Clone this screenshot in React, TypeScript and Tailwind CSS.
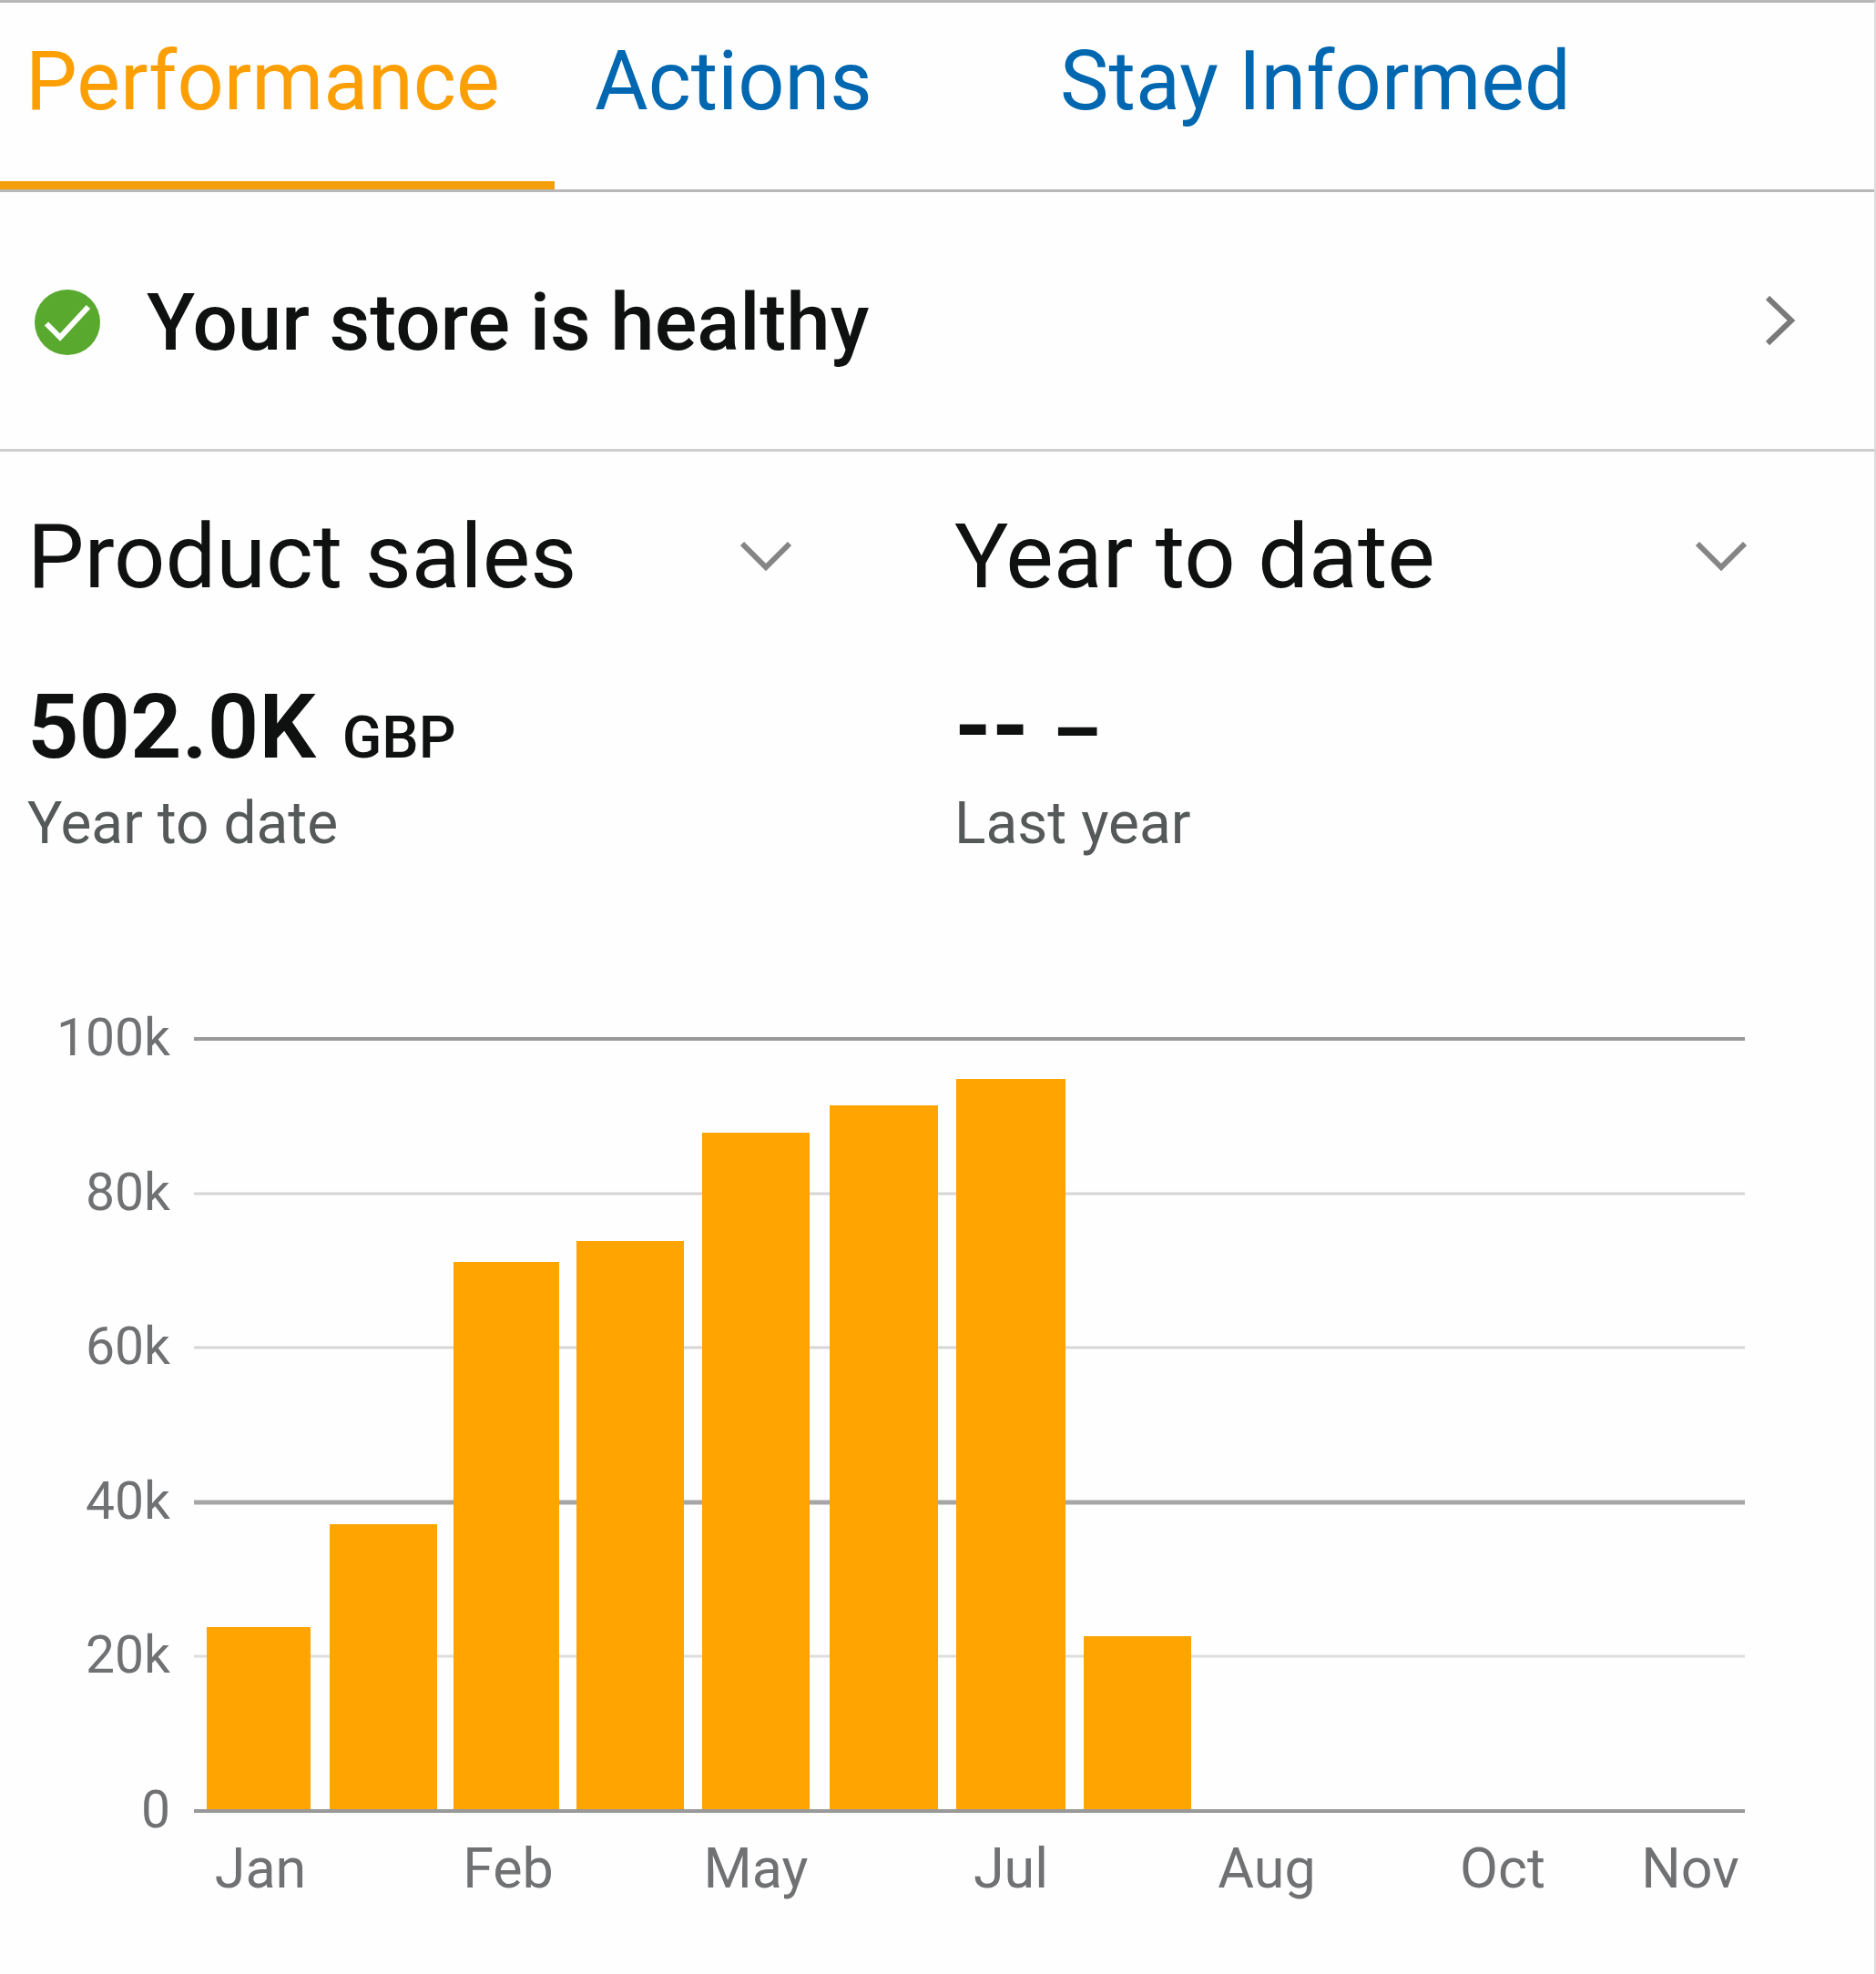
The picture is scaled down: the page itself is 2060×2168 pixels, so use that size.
import React, { useState } from 'react';

interface Bar {
  x: number;
  width: number;
  value: number;
}

interface Tick {
  label: string;
  value: number;
  stroke: string;
  thickness: number;
}

const tabs = ['Performance', 'Actions', 'Stay Informed'];

const metrics = ['Product sales', 'Units ordered', 'Page views'];
const ranges = ['Year to date', 'Last 30 days', 'Last 7 days', 'Today'];

const ticks: Tick[] = [
  { label: '100k', value: 100, stroke: '#999999', thickness: 4 },
  { label: '80k', value: 80, stroke: '#d6d6d6', thickness: 3 },
  { label: '60k', value: 60, stroke: '#d6d6d6', thickness: 3 },
  { label: '40k', value: 40, stroke: '#a6a6a6', thickness: 5 },
  { label: '20k', value: 20, stroke: '#dedede', thickness: 3 },
  { label: '0', value: 0, stroke: '#999999', thickness: 4 },
];

// values in thousands
const bars: Bar[] = [
  { x: 227, width: 114, value: 23.8 },
  { x: 362, width: 118, value: 37.1 },
  { x: 498, width: 116, value: 71.1 },
  { x: 633, width: 118, value: 73.8 },
  { x: 771, width: 118, value: 87.8 },
  { x: 911, width: 119, value: 91.4 },
  { x: 1050, width: 120, value: 94.8 },
  { x: 1190, width: 118, value: 22.6 },
];

const months = [
  { label: 'Jan', x: 286 },
  { label: 'Feb', x: 558 },
  { label: 'May', x: 830 },
  { label: 'Jul', x: 1110 },
  { label: 'Aug', x: 1391 },
  { label: 'Oct', x: 1650 },
  { label: 'Nov', x: 1856 },
];

const CHART_TOP = 61;
const CHART_HEIGHT = 848;
const yOf = (value: number) => Math.round(CHART_TOP + CHART_HEIGHT * (1 - value / 100));

const CheckCircle = () => (
  <svg className="size-[74px] shrink-0" viewBox="0 0 74 74" aria-hidden="true">
    <circle cx="37" cy="37" r="36" fill="#58a92e" />
    <path d="M14 38.5 L29 53.5 L60 20" fill="none" stroke="#fff" strokeWidth="6" />
  </svg>
);

const ChevronRight = () => (
  <svg className="h-[58px] w-[36px] shrink-0" viewBox="0 0 36 58" aria-hidden="true">
    <path d="M3 2 L29 27 L3 52" fill="none" stroke="#7a7a7a" strokeWidth="6" />
  </svg>
);

const ChevronDown = () => (
  <svg className="pointer-events-none h-[36px] w-[56px] shrink-0" viewBox="0 0 56 36" aria-hidden="true">
    <path d="M2 4 L28 30 L54 4" fill="none" stroke="#858585" strokeWidth="6" />
  </svg>
);

interface PickerProps {
  label: string;
  options: string[];
}

const Picker: React.FC<PickerProps> = ({ label, options }) => {
  const [value, setValue] = useState(options[0]);

  return (
    <label className="flex items-center justify-between">
      <select
        aria-label={label}
        value={value}
        onChange={(e) => setValue(e.target.value)}
        className="h-[116px] min-w-0 flex-1 appearance-none bg-transparent text-[99px] leading-[116px] text-[#0f1111] outline-none"
      >
        {options.map((option) => (
          <option key={option}>{option}</option>
        ))}
      </select>
      <ChevronDown />
    </label>
  );
};

const SalesChart = () => (
  <svg className="block w-full" viewBox="0 0 2058 1086" role="img" aria-label="Product sales by month">
    {ticks.map((tick) => (
      <g key={tick.label}>
        <text x="187" y={yOf(tick.value) + 18} textAnchor="end" fontSize="57" fill="#6f7173">
          {tick.label}
        </text>
        <line
          x1="213"
          x2="1916"
          y1={yOf(tick.value)}
          y2={yOf(tick.value)}
          stroke={tick.stroke}
          strokeWidth={tick.thickness}
        />
      </g>
    ))}
    {bars.map((bar) => (
      <rect
        key={bar.x}
        x={bar.x}
        y={yOf(bar.value)}
        width={bar.width}
        height={yOf(0) - 2 - yOf(bar.value)}
        fill="#ffa400"
      />
    ))}
    {months.map((month) => (
      <text key={month.label} x={month.x} y="993" textAnchor="middle" fontSize="61" fill="#6f7173">
        {month.label}
      </text>
    ))}
  </svg>
);

const App: React.FC = () => {
  const [activeTab, setActiveTab] = useState('Performance');

  return (
    <div className="min-h-screen border-t-3 border-r-2 border-t-[#b8b8b8] border-r-[#dcdcdc] bg-[#fefefe] font-['Roboto','Liberation_Sans',sans-serif] text-[#0f1111]">
      {/* Tabs */}
      <div role="tablist" className="grid grid-cols-[609fr_511fr_938fr] border-b-3 border-[#b8b8b8]">
        {tabs.map((tab) => (
          <button
            key={tab}
            role="tab"
            aria-selected={tab === activeTab}
            onClick={() => setActiveTab(tab)}
            className={`border-b-9 pt-[33px] pb-[55px] text-left text-[90px] leading-[108px] whitespace-nowrap first:pl-[28px] not-first:pl-[44px] ${
              tab === activeTab ? 'border-[#f59e0b] text-[#fc9f05]' : 'border-transparent text-[#0067b0]'
            }`}
          >
            {tab}
          </button>
        ))}
      </div>

      {/* Store health */}
      <button className="flex w-full items-center border-b-3 border-[#cccccc] pt-[91px] pr-[84px] pb-[87px] pl-[37px] text-left">
        <CheckCircle />
        <span className="ml-[50px] flex-1 text-[87px] leading-[104px] font-medium">Your store is healthy</span>
        <ChevronRight />
      </button>

      {/* Filters and totals */}
      <div className="grid grid-cols-[839fr_870fr] gap-x-[179px] pt-[57px] pr-[140px] pl-[30px]">
        <Picker label="Metric" options={metrics} />
        <Picker label="Date range" options={ranges} />
        <div className="mt-[71px]">
          <p className="text-[99px] leading-[116px] font-semibold">
            502.0K <span className="ml-1 text-[64px] leading-none font-medium">GBP</span>
          </p>
          <p className="mt-[11px] text-[64px] leading-[76px] text-[#565959]">Year to date</p>
        </div>
        <div className="mt-[71px]">
          <p className="text-[104px] leading-[116px] font-bold">
            -- <span className="text-[84px] leading-none">–</span>
          </p>
          <p className="mt-[11px] text-[64px] leading-[76px] text-[#565959]">Last year</p>
        </div>
      </div>

      <div className="mt-[137px]">
        <SalesChart />
      </div>
    </div>
  );
};

export default App;
